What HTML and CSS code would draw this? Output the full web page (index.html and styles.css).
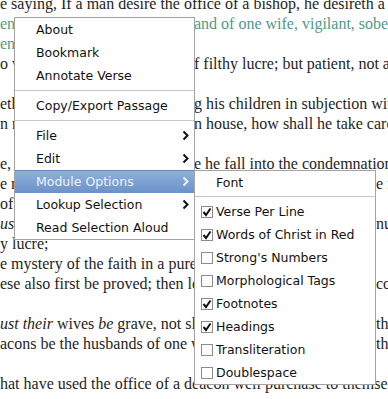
FILE: index.html
```html
<!DOCTYPE html>
<html lang="en">
<head>
  <meta charset="UTF-8">
  <meta name="viewport" content="width=device-width, initial-scale=1.0">
  <title>1 Timothy 3</title>
  <link rel="stylesheet" href="styles.css">
</head>
<body>
  <div class="passage">
    <div class="ln">e saying, If a man desire the office of a bishop, he desireth a good work.</div>
    <div class="ln sel"><span class="l">en must be blameless, the husb</span>and of one wife, vigilant, sober</div>
    <div class="ln sel"><span class="l">ent, apt to teach;</span></div>
    <div class="ln"><span class="l">o wine, no striker, not greedy o</span>f filthy lucre; but patient, not a</div>
    <div class="ln"></div>
    <div class="ln"><span class="l">eth well his own house, havin</span>g his children in subjection with</div>
    <div class="ln"><span class="l">n not how to rule his ow</span>n house, how shall he take care</div>
    <div class="ln"></div>
    <div class="ln"><span class="l">e, lest being lifted up with prid</span>e he fall into the condemnation</div>
    <div class="ln"><span class="l w">e must have a good report</span>e fall</div>
    <div class="ln"><span class="l">of the devil.</span></div>
    <div class="ln"><span class="l w"><i>us</i>t the deacons be grave</span>nu<span class="red">e</span></div>
    <div class="ln">y lucre;</div>
    <div class="ln">e mystery of the faith in a pure conscience.</div>
    <div class="ln"><span class="l w">ese also first be proved; then let them use</span>co</div>
    <div class="ln"></div>
    <div class="ln"><span class="l w"><i>ust their</i> wives <i>be</i> grave, not slanderers</span>th</div>
    <div class="ln"><span class="l w">acons be the husbands of one wife, ruling</span>th</div>
    <div class="ln"></div>
    <div class="ln">hat have used the office of a deacon well purchase to themselves a good degree</div>
  </div>

  <div class="menu main-menu">
    <div class="item">About</div>
    <div class="item">Bookmark</div>
    <div class="item">Annotate Verse</div>
    <div class="sep"></div>
    <div class="item">Copy/Export Passage</div>
    <div class="sep"></div>
    <div class="item">File <svg class="arrow" viewBox="0 0 7 11"><path d="M1.5 1.5 L5.5 5.5 L1.5 9.5"/></svg></div>
    <div class="item">Edit <svg class="arrow" viewBox="0 0 7 11"><path d="M1.5 1.5 L5.5 5.5 L1.5 9.5"/></svg></div>
    <div class="item active">Module Options <svg class="arrow" viewBox="0 0 7 11"><path d="M1.5 1.5 L5.5 5.5 L1.5 9.5"/></svg></div>
    <div class="item">Lookup Selection <svg class="arrow" viewBox="0 0 7 11"><path d="M1.5 1.5 L5.5 5.5 L1.5 9.5"/></svg></div>
    <div class="item">Read Selection Aloud</div>
  </div>

  <div class="menu options-menu">
    <div class="item">Font</div>
    <div class="sep sep-sub"></div>
    <div class="item check"><span class="box"><svg viewBox="0 0 12 12"><path d="M2.5 6 L5 9 L9.5 2.5"/></svg></span>Verse Per Line</div>
    <div class="item check"><span class="box"><svg viewBox="0 0 12 12"><path d="M2.5 6 L5 9 L9.5 2.5"/></svg></span>Words of Christ in Red</div>
    <div class="item check"><span class="box"></span>Strong's Numbers</div>
    <div class="item check"><span class="box"></span>Morphological Tags</div>
    <div class="item check"><span class="box"><svg viewBox="0 0 12 12"><path d="M2.5 6 L5 9 L9.5 2.5"/></svg></span>Footnotes</div>
    <div class="item check"><span class="box"><svg viewBox="0 0 12 12"><path d="M2.5 6 L5 9 L9.5 2.5"/></svg></span>Headings</div>
    <div class="item check"><span class="box"></span>Transliteration</div>
    <div class="item check"><span class="box"></span>Doublespace</div>
  </div>
</body>
</html>
```

FILE: styles.css
```css
body {
  margin: 0;
  width: 388px;
  height: 399px;
  overflow: hidden;
  background-color: #ffffff;
  position: relative;
}
.passage {
  margin-top: -6px;
  font-family: "Liberation Serif", "Times New Roman", serif;
  font-size: 16px;
  line-height: 20px;
  color: #1e1e1e;
}
.ln {
  height: 20px;
  white-space: nowrap;
  overflow: hidden;
}
.ln .l {
  display: inline-block;
  vertical-align: top;
  width: 194px;
  overflow: hidden;
}
.ln .l.w {
  width: 376px;
}
.sel {
  color: #4f9a84;
}
.red {
  color: #b0302a;
}

/* popup menus */
.menu {
  position: absolute;
  box-sizing: border-box;
  background-color: #ffffff;
  border: 1px solid #a3a3a3;
  font-family: "DejaVu Sans", sans-serif;
  font-size: 12.5px;
  color: #111111;
}
.main-menu {
  left: 14px;
  top: 17px;
  width: 181px;
}
.options-menu {
  left: 194px;
  top: 170px;
  width: 182px;
}
.item {
  height: 23px;
  display: flex;
  align-items: center;
  justify-content: space-between;
  padding: 0 5px 0 21px;
  white-space: nowrap;
}
.item.active {
  background: linear-gradient(#8fb1dd, #6b92c8);
  box-shadow: inset 0 1px #6489bf;
  color: #eef3fa;
}
.arrow {
  width: 7px;
  height: 11px;
}
.arrow path {
  fill: none;
  stroke: currentColor;
  stroke-width: 2;
}
.sep {
  height: 1px;
  margin: 3px 0;
  background-color: #c6c6c6;
}
.sep-sub {
  margin: 2px 0 3px;
}
.item.check {
  justify-content: flex-start;
  padding-left: 6px;
}
.box {
  box-sizing: border-box;
  width: 12px;
  height: 12px;
  margin-right: 3px;
  border: 1px solid #8c8c8c;
  background-color: #ffffff;
  position: relative;
}
.box svg {
  position: absolute;
  left: -1px;
  top: -1px;
  width: 12px;
  height: 12px;
}
.box path {
  fill: none;
  stroke: #111111;
  stroke-width: 2;
}
```
